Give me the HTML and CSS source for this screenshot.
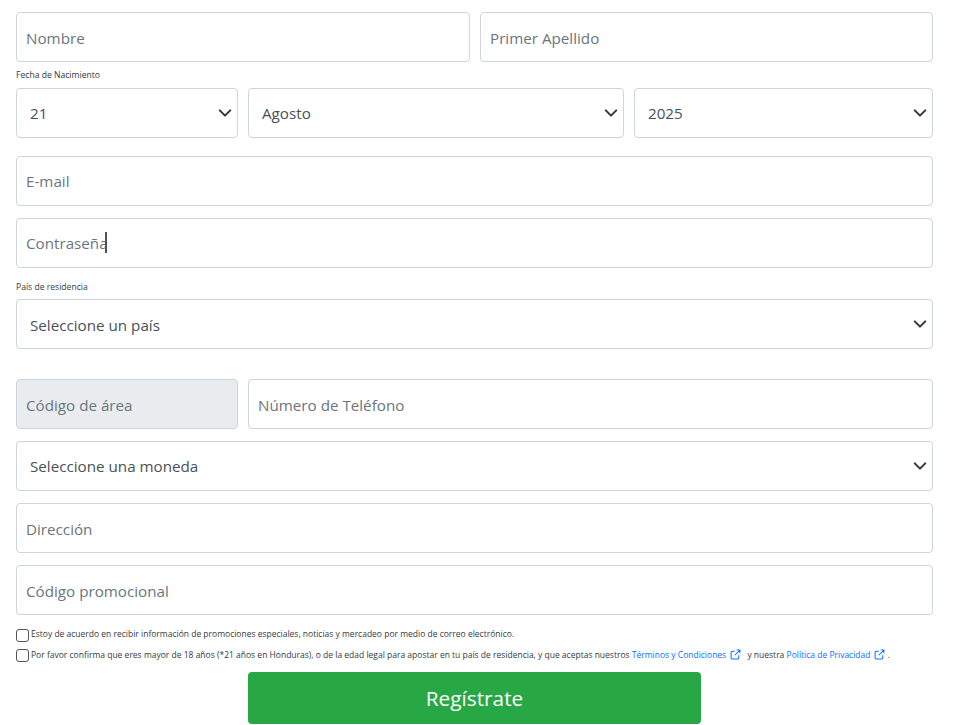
FILE: index.html
```html
<!DOCTYPE html>
<html lang="es">
<head>
<meta charset="utf-8">
<title>Registro</title>
<link rel="stylesheet" href="styles.css">
</head>
<body>
<form class="form">
  <div class="row row-top">
    <input class="control" type="text" placeholder="Nombre">
    <input class="control" type="text" placeholder="Primer Apellido">
  </div>
  <label class="mini-label label-birth">Fecha de Nacimiento</label>
  <div class="row row-date">
    <select class="control select"><option>21</option></select>
    <select class="control select"><option>Agosto</option></select>
    <select class="control select"><option>2025</option></select>
  </div>
  <input class="control control-high gap-18" type="email" placeholder="E-mail">
  <div class="caret-wrap gap-12">
    <input class="control control-high" type="text" placeholder="Contraseña">
    <span class="caret"></span>
  </div>
  <label class="mini-label label-country">País de residencia</label>
  <select class="control select select-wide"><option>Seleccione un país</option></select>
  <div class="row row-phone gap-30">
    <input class="control disabled" type="text" placeholder="Código de área" disabled>
    <input class="control" type="tel" placeholder="Número de Teléfono">
  </div>
  <select class="control select gap-12"><option>Seleccione una moneda</option></select>
  <input class="control gap-12" type="text" placeholder="Dirección">
  <input class="control gap-12" type="text" placeholder="Código promocional">
  <div class="check check-first">
    <input type="checkbox" class="box">
    <span class="check-text-first">Estoy de acuerdo en recibir información de promociones especiales, noticias y mercadeo por medio de correo electrónico.</span>
  </div>
  <div class="check check-second">
    <input type="checkbox" class="box">
    <span>Por favor confirma que eres mayor de 18 años (*21 años en Honduras), o de la edad legal para apostar en tu país de residencia, y que aceptas nuestros <a href="#">Términos y Condiciones<svg class="ext" viewBox="0 0 12 12" aria-hidden="true"><path d="M9.5 6.8v3a1 1 0 0 1-1 1H2.2a1 1 0 0 1-1-1V3.5a1 1 0 0 1 1-1h3M7.3 1.2h3.5v3.5M10.6 1.4 5.2 6.8"/></svg></a> y nuestra <a href="#">Política de Privacidad<svg class="ext ext-last" viewBox="0 0 12 12" aria-hidden="true"><path d="M9.5 6.8v3a1 1 0 0 1-1 1H2.2a1 1 0 0 1-1-1V3.5a1 1 0 0 1 1-1h3M7.3 1.2h3.5v3.5M10.6 1.4 5.2 6.8"/></svg></a> .</span>
  </div>
  <button class="submit" type="button">Regístrate</button>
</form>
</body>
</html>
```

FILE: styles.css
```css
* { box-sizing: border-box; }
html, body { margin: 0; background: #fff; }
body { font-family: "Open Sans", "Noto Sans", sans-serif; color: #495057; overflow: hidden; height: 725px; }
.form { display: flex; flex-direction: column; width: 917px; margin-left: 16px; padding-top: 12px; }
.row { display: grid; column-gap: 10px; }
.row-top { grid-template-columns: 454px 453px; }
.row-date { grid-template-columns: 222px 376px 299px; }
.row-phone { grid-template-columns: 222px 685px; }
.control {
  display: block; width: 100%; height: 50px; margin: 0;
  border: 1px solid #ced4da; border-radius: 4px; background-color: #fff;
  padding: 2px 9px 0; font: 15.2px/22px "Open Sans", "Noto Sans", sans-serif; color: #495057;
  outline: none;
}
.control-high { padding-top: 0; }
.control::placeholder { color: #6c757d; opacity: 1; }
.disabled { background: #e9ecef; }
.select {
  appearance: none; -webkit-appearance: none; padding: 0 0 0 13px;
  background-image: url("data:image/svg+xml,%3Csvg xmlns='http://www.w3.org/2000/svg' viewBox='0 0 16 16'%3E%3Cpath fill='none' stroke='%23343a40' stroke-linecap='round' stroke-linejoin='round' stroke-width='2.4' d='M2 5l6 6 6-6'/%3E%3C/svg%3E");
  background-repeat: no-repeat; background-position: right 5px center; background-size: 14px 14px;
}
.select-wide { padding-top: 2px; }
.mini-label { display: block; font-size: 8.6px; line-height: 12px; color: #343a40; }
.label-birth { margin-top: 7px; margin-bottom: 7px; }
.label-country { margin-top: 13px; margin-bottom: 6px; }
.gap-12 { margin-top: 12px; }
.gap-18 { margin-top: 18px; }
.gap-30 { margin-top: 30px; }
.caret-wrap { position: relative; }
.caret { position: absolute; left: 89px; top: 14px; width: 2px; height: 21px; background: #4a5563; }
.check { display: flex; align-items: flex-start; font-size: 8.5px; line-height: 13px; color: #343a40; }
.check-first { margin-top: 13px; }
.check-second { margin-top: 6px; }
.check-text-first { margin-top: -1px; }
.box {
  appearance: none; -webkit-appearance: none; flex: none;
  width: 13px; height: 13px; margin: 1px 2px 0 0; border: 1px solid #555; border-radius: 3px; background: #fff;
}
.check a { color: #0d6efd; text-decoration: none; }
.ext { width: 11px; height: 11px; margin: 0 4px 0 4px; vertical-align: -2px; fill: none; stroke: #0d6efd; stroke-width: 1.1; }
.ext-last { margin-right: 0; }
.submit {
  display: block; width: 453px; height: 52px; margin: 10px 0 0 232px;
  border: 0; border-radius: 4px; background: #28a745; color: #fff;
  font: 20.8px/26px "Open Sans", "Noto Sans", sans-serif;
}
```
